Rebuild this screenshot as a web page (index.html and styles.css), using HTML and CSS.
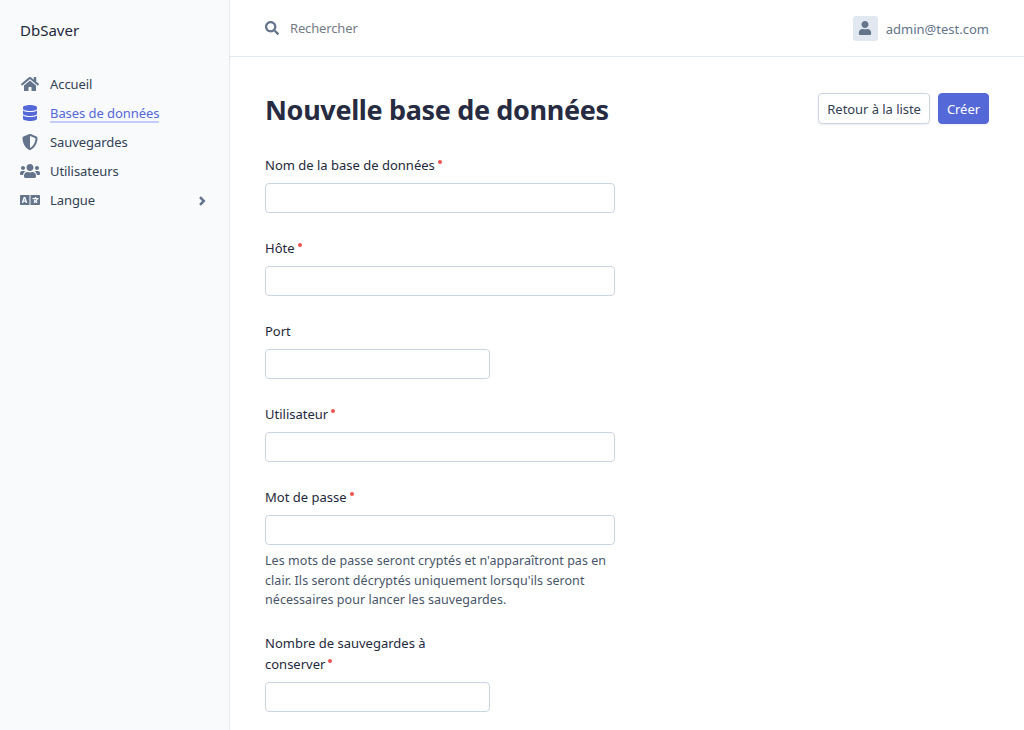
FILE: index.html
```html
<!DOCTYPE html>
<html lang="fr">
<head>
<meta charset="utf-8">
<title>DbSaver - Nouvelle base de données</title>
<link rel="stylesheet" href="styles.css">
</head>
<body>
<div class="layout">
  <aside class="sidebar">
    <a class="brand"><span>DbSaver</span></a>
    <nav class="menu">
      <a class="item"><svg class="icon" viewBox="0 0 576 512"><path d="M280.4 148.3 96 300.1V464a16 16 0 0 0 16 16l112-.3a16 16 0 0 0 16-16V368a16 16 0 0 1 16-16h64a16 16 0 0 1 16 16v95.6a16 16 0 0 0 16 16.1l112 .3a16 16 0 0 0 16-16V300L295.700 148.300a12.200 12.200 0 0 0-15.300 0zM571.600 251.500 488 182.600V44a12 12 0 0 0-12-12h-56a12 12 0 0 0-12 12v72.600L318.500 43a48 48 0 0 0-61 0L4.300 251.500a12 12 0 0 0-1.600 16.900l25.500 31a12 12 0 0 0 16.900 1.600L280.400 107a12.200 12.200 0 0 1 15.300 0l235.300 193.900a12 12 0 0 0 16.900-1.600l25.500-31a12 12 0 0 0-1.800-16.800z"/></svg><span>Accueil</span></a>
      <a class="item active"><svg class="icon" viewBox="0 0 448 512"><path d="M448 73.100v45.800C448 159.100 347.700 192 224 192S0 159.100 0 118.900V73.100C0 32.900 100.300 0 224 0s224 32.900 224 73.100zM448 176v102.900C448 319.100 347.700 352 224 352S0 319.100 0 278.900V176c48.100 33.100 136.200 48.600 224 48.600S399.900 209.100 448 176zm0 160v102.900C448 479.100 347.700 512 224 512S0 479.100 0 438.900V336c48.100 33.100 136.200 48.600 224 48.600S399.900 369.100 448 336z"/></svg><span>Bases de données</span></a>
      <a class="item"><svg class="icon" viewBox="0 0 512 512"><path d="M466.500 83.700l-192-80a48.200 48.200 0 0 0-36.900 0l-192 80C27.700 91.100 16 108.600 16 128c0 198.500 114.500 335.700 221.500 380.300 11.800 4.900 25.100 4.900 36.900 0C360.100 472.600 496 349.300 496 128c0-19.400-11.700-36.900-29.500-44.300zM256.100 446.300l-.1-381 175.900 73.300c-3.300 151.400-82.100 261.100-175.800 307.700z"/></svg><span>Sauvegardes</span></a>
      <a class="item"><svg class="icon" viewBox="0 0 640 512"><path d="M96 224c35.300 0 64-28.700 64-64s-28.700-64-64-64-64 28.700-64 64 28.700 64 64 64zm448 0c35.300 0 64-28.700 64-64s-28.700-64-64-64-64 28.700-64 64 28.700 64 64 64zm32 32h-64c-17.600 0-33.500 7.100-45.100 18.600 40.300 22.100 68.900 62 75.100 109.400h66c17.700 0 32-14.300 32-32v-32c0-35.300-28.700-64-64-64zm-256 0c61.900 0 112-50.100 112-112S381.900 32 320 32 208 82.100 208 144s50.100 112 112 112zm76.800 32h-8.300c-20.800 10-43.900 16-68.500 16s-47.600-6-68.500-16h-8.300C179.600 288 128 339.600 128 403.200V432c0 26.500 21.500 48 48 48h288c26.500 0 48-21.500 48-48v-28.800c0-63.600-51.600-115.200-115.200-115.200zm-223.700-13.400C161.500 263.100 145.600 256 128 256H64c-35.300 0-64 28.700-64 64v32c0 17.700 14.300 32 32 32h65.900c6.300-47.400 34.900-87.300 75.200-109.400z"/></svg><span>Utilisateurs</span></a>
      <a class="item"><svg class="icon" viewBox="0 0 640 512"><path d="M152.100 236.200c-3.500-12.100-7.800-33.200-7.800-33.200h-.5s-4.300 21.100-7.800 33.200l-11.100 37.500H163zM616 96H336v320h280c13.300 0 24-10.700 24-24V120c0-13.300-10.700-24-24-24zm-24 120c0 6.600-5.400 12-12 12h-11.400c-6.900 23.600-21.700 47.400-42.700 69.900 8.400 6.400 17.100 12.500 26.100 18 5.500 3.400 7.300 10.500 4.100 16.200l-7.900 13.900c-3.400 5.900-10.900 7.800-16.700 4.300-12.600-7.800-24.500-16.100-35.400-24.900-10.900 8.700-22.700 17.100-35.400 24.900-5.800 3.500-13.300 1.600-16.700-4.300l-7.900-13.900c-3.200-5.600-1.400-12.800 4.200-16.200 9.300-5.700 18-11.700 26.100-18-7.900-8.400-14.900-17-21-25.700-4-5.700-2.200-13.600 3.700-17.100l6.500-3.900 7.300-4.300c5.400-3.200 12.400-1.700 16 3.400 5 7 10.800 14 17.400 20.900 13.500-14.200 23.800-28.900 30-43.200H412c-6.600 0-12-5.400-12-12v-16c0-6.600 5.400-12 12-12h64v-16c0-6.600 5.400-12 12-12h16c6.600 0 12 5.400 12 12v16h64c6.600 0 12 5.400 12 12zM0 120v272c0 13.300 10.700 24 24 24h280V96H24c-13.300 0-24 10.700-24 24zm58.900 216.100L116.400 167c1.700-4.900 6.200-8.100 11.400-8.100h32.500c5.100 0 9.700 3.300 11.400 8.100l57.500 169.100c2.600 7.800-3.100 15.900-11.400 15.900h-22.900a12 12 0 0 1-11.500-8.600l-9.400-31.900h-60.200l-9.100 31.800c-1.500 5.100-6.200 8.700-11.500 8.700H70.300c-8.200 0-14-8.100-11.400-15.900z"/></svg><span>Langue</span><svg class="chevron" viewBox="0 0 8 10"><path d="M2 1.200 5.800 5 2 8.800"/></svg></a>
    </nav>
  </aside>
  <main class="main">
    <header class="topbar">
      <div class="search"><svg viewBox="0 0 512 512"><path d="M505 442.700 405.300 343c-4.500-4.500-10.600-7-17-7H372c27.600-35.300 44-79.700 44-128C416 93.100 322.900 0 208 0S0 93.100 0 208s93.100 208 208 208c48.300 0 92.700-16.400 128-44v16.300c0 6.400 2.500 12.500 7 17l99.700 99.700c9.400 9.400 24.600 9.400 33.900 0l28.300-28.300c9.400-9.400 9.400-24.600.1-34zM208 336c-70.700 0-128-57.200-128-128 0-70.700 57.200-128 128-128 70.700 0 128 57.200 128 128 0 70.700-57.200 128-128 128z"/></svg><span>Rechercher</span></div>
      <div class="user"><span class="avatar"><svg viewBox="0 0 448 512"><path d="M224 256c70.700 0 128-57.300 128-128S294.700 0 224 0 96 57.300 96 128s57.300 128 128 128zm89.600 32h-16.700c-22.200 10.200-46.900 16-72.900 16s-50.600-5.800-72.900-16h-16.700C60.200 288 0 348.200 0 422.400V464c0 26.500 21.500 48 48 48h352c26.500 0 48-21.500 48-48v-41.600c0-74.200-60.200-134.400-134.400-134.400z"/></svg></span><span class="email">admin@test.com</span></div>
    </header>
    <div class="heading">
      <h1>Nouvelle base de données</h1>
      <div class="actions"><a class="btn back">Retour à la liste</a><button class="btn primary">Créer</button></div>
    </div>
    <form class="form">
      <div class="field"><label class="required">Nom de la base de données</label><input type="text"></div>
      <div class="field"><label class="required">Hôte</label><input type="text"></div>
      <div class="field short"><label>Port</label><input type="text"></div>
      <div class="field"><label class="required">Utilisateur</label><input type="text"></div>
      <div class="field"><label class="required">Mot de passe</label><input type="password"><p class="help">Les mots de passe seront cryptés et n'apparaîtront pas en<br>clair. Ils seront décryptés uniquement lorsqu'ils seront<br>nécessaires pour lancer les sauvegardes.</p></div>
      <div class="field short"><label class="required">Nombre de sauvegardes à<br>conserver</label><input type="text"></div>
    </form>
  </main>
</div>
</body>
</html>
```
FILE: styles.css
```css
* { box-sizing: border-box; }
body { margin: 0; height: 730px; overflow: hidden; background: #fff; color: #1e293b; font: 13px/21px "Noto Sans", "Open Sans", sans-serif; }
.layout { display: flex; height: 730px; }
.sidebar { width: 230px; flex: none; background: #f8fafc; border-right: 1px solid #e2e8f0; padding: 18px 20px; }
.brand { display: block; font-size: 15px; line-height: 24px; color: #1e293b; }
.menu { display: flex; flex-direction: column; margin-top: 27.5px; }
.item { display: flex; align-items: center; height: 29px; color: #334155; }
.item span { line-height: 22px; letter-spacing: -0.07px; }
.icon { width: 20px; height: 16px; margin-right: 10px; fill: #64748b; }
.item.active { color: #5468d8; }
.active span { line-height: 15px; margin-top: 2px; border-bottom: 2px solid #c3cdfa; }
.active .icon { fill: #5468d8; }
.chevron { width: 8px; height: 10px; margin: 1px 3px 0 auto; fill: none; stroke: #64748b; stroke-width: 2.5; }
.main { flex: 1; min-width: 0; }
.topbar { display: flex; justify-content: space-between; height: 57px; padding: 0 35px; border-bottom: 1px solid #e2e8f0; align-items: center; }
.search { display: flex; align-items: center; gap: 11px; color: #757b86; letter-spacing: -0.15px; }
.search svg { width: 14px; height: 14px; fill: #64748b; }
.user { display: flex; align-items: center; gap: 8px; color: #64748b; }
.email { padding-top: 2px; }
.avatar { display: flex; align-items: center; justify-content: center; width: 25px; height: 25px; border-radius: 3px; background: #e2e8f0; }
.avatar svg { width: 14px; height: 14px; margin-bottom: 1px; fill: #64748b; }
.heading { display: flex; justify-content: space-between; align-items: center; height: 31px; margin: 36px 35px 31px; }
h1 { margin: 0; padding-top: 2px; font-size: 27px; line-height: 34px; font-weight: 700; color: #272b41; letter-spacing: -0.35px; white-space: nowrap; }
.actions { display: flex; gap: 8px; }
.btn { font: inherit; letter-spacing: -0.05px; height: 31px; padding: 5px 8px 3px; border: 1px solid #cbd5e1; border-radius: 4px; background: #fff; color: #334155; box-shadow: 0 1px 2px rgba(0,0,0,.07); white-space: nowrap; }
.primary { background: #5468d8; border-color: #5468d8; color: #fff; }
.form { display: flex; flex-direction: column; gap: 25px; padding-left: 35px; }
.field { width: 350px; }
.short { width: 225px; }
label { display: block; height: 21px; margin-bottom: 7px; }
label:has(br) { height: 42px; }
.required::after { content: ""; display: inline-block; width: 4px; height: 4px; margin-left: 3px; border-radius: 50%; background: #ef5350; vertical-align: 6px; }
input { display: block; width: 100%; height: 30px; padding: 4px 8px; border: 1px solid #cbd5e1; border-radius: 4px; background: #fff; outline: none; font: inherit; }
.help { margin: 6px 0 -1.5px; font-size: 12.5px; line-height: 19.5px; letter-spacing: 0.05px; color: #475569; white-space: nowrap; }
```
